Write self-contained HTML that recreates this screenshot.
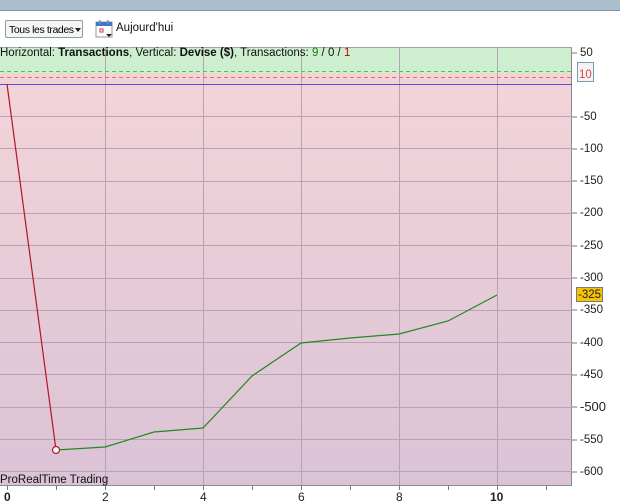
<!DOCTYPE html>
<html><head><style>
body{margin:0;width:620px;height:504px;overflow:hidden;background:#fff;font-family:"Liberation Sans",sans-serif;font-size:12px;position:relative}
.top{position:absolute;left:0;top:0;width:620px;height:10px;background:#a9bfcc;border-bottom:1px solid #7d96a5}
.btn{position:absolute;left:5px;top:20px;width:78px;height:18px;border:1px solid #8a9aa8;border-radius:2px;background:#f6f6f6;font-size:10.5px;line-height:18px;padding-left:3px;box-sizing:border-box;white-space:nowrap;overflow:hidden;letter-spacing:-0.4px}
.arr{position:absolute;left:75px;top:28px;width:0;height:0;border-left:3px solid transparent;border-right:3px solid transparent;border-top:4px solid #222}
.lbl{position:absolute;font-size:11px;color:#111;white-space:nowrap}
.yl{position:absolute;left:580px;font-size:11.5px;color:#222;line-height:12px}
.xl{position:absolute;top:490px;font-size:12px;font-weight:bold;color:#222}
</style></head><body>
<div class="top"></div>
<div class="btn">Tous les trades</div>
<div class="arr"></div>
<svg style="position:absolute;left:95px;top:19px" width="19" height="20"><rect x="1" y="3" width="16" height="15" fill="#fff" stroke="#8a9aa8"/><rect x="1" y="3" width="16" height="4" fill="#3a78c8"/><rect x="4" y="1" width="1.5" height="4" fill="#888"/><rect x="12" y="1" width="1.5" height="4" fill="#888"/><rect x="5" y="10" width="3" height="3" fill="none" stroke="#d33"/><path d="M11 15h6l-3 3z" fill="#222"/></svg>
<div class="lbl" style="left:116px;top:22px;font-size:11.5px">Aujourd'hui</div>
<svg style="position:absolute;left:0;top:0" width="620" height="504">
<defs><linearGradient id="p" x1="0" y1="0" x2="0" y2="1"><stop offset="0" stop-color="#f3d4d8"/><stop offset="1" stop-color="#dac3d6"/></linearGradient></defs>
<rect x="0" y="47" width="572" height="26" fill="#cdefd0"/>
<rect x="0" y="73" width="572" height="413" fill="url(#p)"/>
<line x1="0" y1="47.5" x2="572" y2="47.5" stroke="#9aa"/>
<line x1="571.5" y1="47" x2="571.5" y2="486" stroke="#8a8a90"/>
<line x1="0" y1="485.5" x2="572" y2="485.5" stroke="#8a8a90"/>
<g stroke="#b7a2b4" stroke-width="1">
<line x1="105.5" y1="48" x2="105.5" y2="485"/><line x1="203.5" y1="48" x2="203.5" y2="485"/><line x1="301.5" y1="48" x2="301.5" y2="485"/><line x1="399.5" y1="48" x2="399.5" y2="485"/><line x1="497.5" y1="48" x2="497.5" y2="485"/>
<line x1="0" y1="116.5" x2="572" y2="116.5"/><line x1="0" y1="148.5" x2="572" y2="148.5"/><line x1="0" y1="181.5" x2="572" y2="181.5"/><line x1="0" y1="213.5" x2="572" y2="213.5"/><line x1="0" y1="245.5" x2="572" y2="245.5"/><line x1="0" y1="278.5" x2="572" y2="278.5"/><line x1="0" y1="310.5" x2="572" y2="310.5"/><line x1="0" y1="342.5" x2="572" y2="342.5"/><line x1="0" y1="374.5" x2="572" y2="374.5"/><line x1="0" y1="407.5" x2="572" y2="407.5"/><line x1="0" y1="439.5" x2="572" y2="439.5"/><line x1="0" y1="471.5" x2="572" y2="471.5"/>
</g>
<line x1="0" y1="71.5" x2="572" y2="71.5" stroke="#4c4" stroke-dasharray="4,3"/>
<line x1="0" y1="77.5" x2="572" y2="77.5" stroke="#e66" stroke-dasharray="4,3"/>
<line x1="0" y1="84.5" x2="572" y2="84.5" stroke="#5a4de0"/>
<g stroke="#777"><line x1="572" y1="53" x2="577" y2="53"/><line x1="572" y1="117" x2="577" y2="117"/><line x1="572" y1="149" x2="577" y2="149"/><line x1="572" y1="181" x2="577" y2="181"/><line x1="572" y1="213" x2="577" y2="213"/><line x1="572" y1="246" x2="577" y2="246"/><line x1="572" y1="278" x2="577" y2="278"/><line x1="572" y1="310" x2="577" y2="310"/><line x1="572" y1="343" x2="577" y2="343"/><line x1="572" y1="375" x2="577" y2="375"/><line x1="572" y1="407" x2="577" y2="407"/><line x1="572" y1="440" x2="577" y2="440"/><line x1="572" y1="472" x2="577" y2="472"/>
<line x1="7.5" y1="486" x2="7.5" y2="490"/><line x1="56.5" y1="486" x2="56.5" y2="490"/><line x1="105.5" y1="486" x2="105.5" y2="490"/><line x1="154.5" y1="486" x2="154.5" y2="490"/><line x1="203.5" y1="486" x2="203.5" y2="490"/><line x1="252.5" y1="486" x2="252.5" y2="490"/><line x1="301.5" y1="486" x2="301.5" y2="490"/><line x1="350.5" y1="486" x2="350.5" y2="490"/><line x1="399.5" y1="486" x2="399.5" y2="490"/><line x1="448.5" y1="486" x2="448.5" y2="490"/><line x1="497.5" y1="486" x2="497.5" y2="490"/><line x1="546.5" y1="486" x2="546.5" y2="490"/></g>
<polyline points="7,84 56,450" fill="none" stroke="#b5142a" stroke-width="1.2"/>
<polyline points="56,450 105,447 154,432 203,428 252,376 301,343 350,338 399,334 448,321 497,295" fill="none" stroke="#1f8a1f" stroke-width="1.2"/>
<circle cx="56" cy="450" r="3.5" fill="#fff" stroke="#b5142a" stroke-width="1.2"/>
<rect x="577.5" y="62.5" width="16" height="19" fill="#f4f4f4" stroke="#7e9aab"/>
<rect x="576.5" y="287.5" width="26" height="14" fill="#f5c400" stroke="#7a7a7a"/>
</svg>
<div class="lbl" style="left:0;top:47px;font-size:11.5px">Horizontal: <b>Transactions</b>, Vertical: <b>Devise ($)</b>, Transactions: <span style="color:#1a7a1a">9</span> / 0 / <span style="color:#c00">1</span></div>
<div class="lbl" style="left:0;top:474px;font-size:11.5px">ProRealTime Trading</div>
<div class="yl" style="top:47px">50</div>
<div class="yl" style="left:579px;top:69px;color:#d44">10</div>
<div class="yl" style="top:111px">-50</div>
<div class="yl" style="top:143px">-100</div>
<div class="yl" style="top:175px">-150</div>
<div class="yl" style="top:207px">-200</div>
<div class="yl" style="top:240px">-250</div>
<div class="yl" style="top:272px">-300</div>
<div class="yl" style="left:578px;top:289px">-325</div>
<div class="yl" style="top:304px">-350</div>
<div class="yl" style="top:337px">-400</div>
<div class="yl" style="top:369px">-450</div>
<div class="yl" style="top:401px;font-size:13px">-500</div>
<div class="yl" style="top:434px">-550</div>
<div class="yl" style="top:466px">-600</div>
<div class="xl" style="left:4px">0</div>
<div class="xl" style="left:102px;font-weight:normal">2</div>
<div class="xl" style="left:200px;font-weight:normal">4</div>
<div class="xl" style="left:298px;font-weight:normal">6</div>
<div class="xl" style="left:396px;font-weight:normal">8</div>
<div class="xl" style="left:490px">10</div>
</body></html>
